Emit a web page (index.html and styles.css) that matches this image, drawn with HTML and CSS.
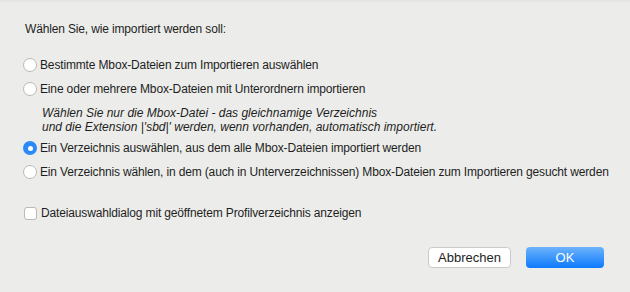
FILE: index.html
```html
<!DOCTYPE html>
<html lang="de">
<head>
    <meta charset="UTF-8">
    <title>Importieren</title>
    <link rel="stylesheet" href="styles.css">
</head>
<body>
    <div class="dialog">
        <p class="prompt">Wählen Sie, wie importiert werden soll:</p>

        <div class="options">
            <label class="option">
                <span class="radio"></span>
                Bestimmte Mbox-Dateien zum Importieren auswählen
            </label>
            <label class="option">
                <span class="radio"></span>
                Eine oder mehrere Mbox-Dateien mit Unterordnern importieren
            </label>
            <div class="hint">
                Wählen Sie nur die Mbox-Datei - das gleichnamige Verzeichnis<br>
                und die Extension |'sbd|' werden, wenn vorhanden, automatisch importiert.
            </div>
            <label class="option">
                <span class="radio checked"></span>
                Ein Verzeichnis auswählen, aus dem alle Mbox-Dateien importiert werden
            </label>
            <label class="option">
                <span class="radio"></span>
                Ein Verzeichnis wählen, in dem (auch in Unterverzeichnissen) Mbox-Dateien zum Importieren gesucht werden
            </label>
        </div>

        <label class="option check-row">
            <span class="checkbox"></span>
            Dateiauswahldialog mit geöffnetem Profilverzeichnis anzeigen
        </label>

        <div class="button-container">
            <button class="cancel-btn">Abbrechen</button>
            <button class="ok-btn">OK</button>
        </div>
    </div>
</body>
</html>
```

FILE: styles.css
```css
body {
    margin: 0;
    padding: 0;
    width: 630px;
    height: 292px;
    background-color: #ecedea;
    font-family: 'Liberation Sans', Arial, sans-serif;
    font-size: 12px;
    letter-spacing: -0.15px;
    color: #1e1e1e;
    overflow: hidden;
}
.dialog {
    border-top: 2px solid #e2e5e0;
    padding: 19px 0 0 25px;
    display: flex;
    flex-direction: column;
}
.prompt {
    margin: 0;
    line-height: 16px;
}
.options {
    margin-top: 15px;
    display: flex;
    flex-direction: column;
}
.option {
    display: flex;
    align-items: center;
    height: 24px;
    margin-left: -2px;
    white-space: nowrap;
}
.option:first-child {
    height: 25px;
}
.radio {
    width: 14px;
    height: 14px;
    box-sizing: border-box;
    border-radius: 50%;
    border: 1px solid #b9bab8;
    background-color: #ffffff;
    margin-right: 3px;
    flex-shrink: 0;
}
.radio.checked {
    border: none;
    background-color: #2b8af7;
    display: flex;
    align-items: center;
    justify-content: center;
}
.radio.checked::after {
    content: '';
    width: 5px;
    height: 5px;
    border-radius: 50%;
    background-color: #ffffff;
}
.hint {
    font-style: italic;
    letter-spacing: 0;
    line-height: 14px;
    padding: 5px 0 2px 17px;
}
.check-row {
    margin-top: 17px;
}
.checkbox {
    width: 13px;
    height: 13px;
    box-sizing: border-box;
    border-radius: 3px;
    border: 1px solid #b9bab8;
    background-color: #ffffff;
    margin: 0 4px 0 1px;
    flex-shrink: 0;
}
.button-container {
    display: flex;
    justify-content: flex-end;
    gap: 15px;
    margin-top: 22px;
    padding-right: 26px;
}
button {
    font-family: 'Liberation Sans', Arial, sans-serif;
    font-size: 13px;
    height: 21px;
    border-radius: 4px;
    padding: 0;
}
.cancel-btn {
    width: 83px;
    background-color: #ffffff;
    border: 1px solid #cacaca;
    color: #1e1e1e;
}
.ok-btn {
    width: 78px;
    border: none;
    color: #ffffff;
    background: linear-gradient(#6cb3fa, #0d7afe);
}
```
